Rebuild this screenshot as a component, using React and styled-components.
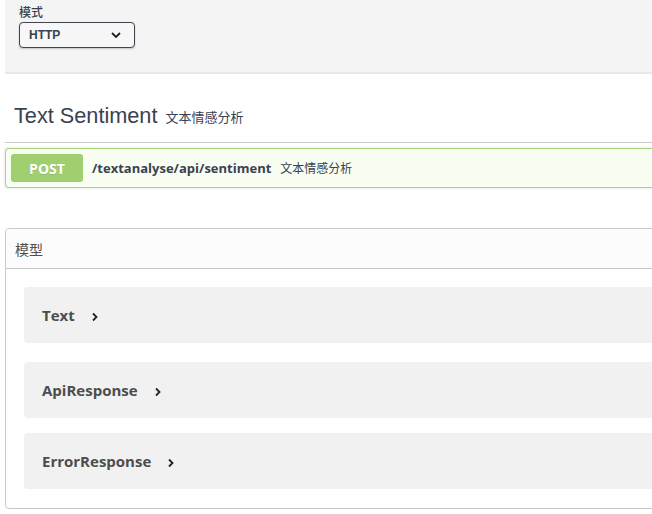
import styled, { createGlobalStyle } from "styled-components";

const Global = createGlobalStyle`
  html, body {
    margin: 0;
    padding: 0;
    background: #fff;
    overflow: hidden;
  }
  body {
    font-family: "Open Sans", "Noto Sans CJK SC", sans-serif;
    color: #3b4151;
  }
`;

const Page = styled.div`
  width: 700px;
  padding-left: 5px;
`;

const SchemeBar = styled.div`
  height: 74px;
  background: #f4f4f4;
  border-bottom: 2px solid #e9e9e9;
  padding: 5px 0 0 14px;
  box-sizing: border-box;
`;

const Label = styled.div`
  font-family: "Liberation Sans", "Noto Sans CJK SC", sans-serif;
  font-size: 12px;
  font-weight: 500;
  line-height: 16px;
  color: #3b4151;
`;

const Select = styled.div`
  margin-top: 1px;
  width: 116px;
  height: 26px;
  box-sizing: border-box;
  border: 1px solid #41444e;
  border-radius: 4px;
  background: #f7f7f7;
  box-shadow: 0 1px 2px rgba(0, 0, 0, 0.2);
  display: flex;
  align-items: center;
  justify-content: space-between;
  padding: 0 13px 0 9px;
  font-family: "Liberation Sans", sans-serif;
  font-size: 12px;
  font-weight: 700;
  color: #3b4151;
`;

const TitleRow = styled.div`
  height: 69px;
  box-sizing: border-box;
  border-bottom: 1px solid #cacaca;
  display: flex;
  align-items: flex-end;
  padding: 0 0 13px 9px;
  gap: 8px;
`;

const Title = styled.span`
  font-family: "Liberation Sans", sans-serif;
  font-size: 21.7px;
  line-height: 26px;
  color: #3b4151;
`;

const Note = styled.span`
  font-family: "Noto Sans CJK SC", sans-serif;
  font-size: ${(p) => p.$size || 12}px;
  line-height: 20px;
  color: #3b4151;
  margin-bottom: ${(p) => p.$lift || 0}px;
`;

const OpBlock = styled.div`
  margin-top: 5px;
  height: 40px;
  box-sizing: border-box;
  border: 1px solid #a6d57e;
  border-right: none;
  border-radius: 4px 0 0 4px;
  background: #f8fef2;
  box-shadow: 0 0 3px rgba(0, 0, 0, 0.12);
  display: flex;
  align-items: center;
  padding-left: 5px;
`;

const Method = styled.span`
  width: 72px;
  height: 28px;
  border-radius: 3px;
  background: #9fcf6f;
  color: #fff;
  font-size: 14px;
  font-weight: 700;
  display: flex;
  align-items: center;
  justify-content: center;
  text-shadow: 0 1px 0 rgba(0, 0, 0, 0.1);
`;

const Path = styled.span`
  margin-left: 9px;
  margin-right: 9px;
  font-size: 13px;
  font-weight: 700;
  color: #3b4151;
`;

const Models = styled.section`
  margin-top: 40px;
  border: 1px solid #c9c9c9;
  border-radius: 4px;
  padding-bottom: 19px;
`;

const ModelsHead = styled.div`
  height: 39px;
  border-bottom: 1px solid #c9c9c9;
  background: #fcfcfc;
  border-radius: 4px 4px 0 0;
  display: flex;
  align-items: center;
  padding-left: 9px;
  font-family: "Noto Sans CJK SC", sans-serif;
  font-size: 14px;
  color: #505050;
`;

const ModelItem = styled.div`
  margin: ${(p) => p.$top}px 0 0 18px;
  height: 56px;
  border-radius: 4px;
  background: #f1f1f1;
  display: flex;
  align-items: center;
  padding-left: 18px;
  gap: 17px;
  font-size: 15px;
  font-weight: 700;
  color: #4d4d4d;
`;

const Chevron = ({ down }) =>
  down ? (
    <svg width="10" height="6" viewBox="0 0 10 6">
      <path d="M1 1l4 4 4-4" fill="none" stroke="#222" strokeWidth="1.8" />
    </svg>
  ) : (
    <svg width="6" height="10" viewBox="0 0 6 10" style={{ marginTop: 3 }}>
      <path d="M1 1.5l3.5 3.5L1 8.5" fill="none" stroke="#222" strokeWidth="1.8" />
    </svg>
  );

const models = [
  { name: "Text", top: 18 },
  { name: "ApiResponse", top: 19 },
  { name: "ErrorResponse", top: 15 },
];

export default function App() {
  return (
    <>
      <Global />
      <Page>
        <SchemeBar>
          <Label>模式</Label>
          <Select>
            HTTP
            <Chevron down />
          </Select>
        </SchemeBar>
        <TitleRow>
          <Title>Text Sentiment</Title>
          <Note $size={13} $lift={2}>文本情感分析</Note>
        </TitleRow>
        <OpBlock>
          <Method>POST</Method>
          <Path>/textanalyse/api/sentiment</Path>
          <Note>文本情感分析</Note>
        </OpBlock>
        <Models>
          <ModelsHead>模型</ModelsHead>
          {models.map((m) => (
            <ModelItem key={m.name} $top={m.top}>
              {m.name}
              <Chevron />
            </ModelItem>
          ))}
        </Models>
      </Page>
    </>
  );
}
